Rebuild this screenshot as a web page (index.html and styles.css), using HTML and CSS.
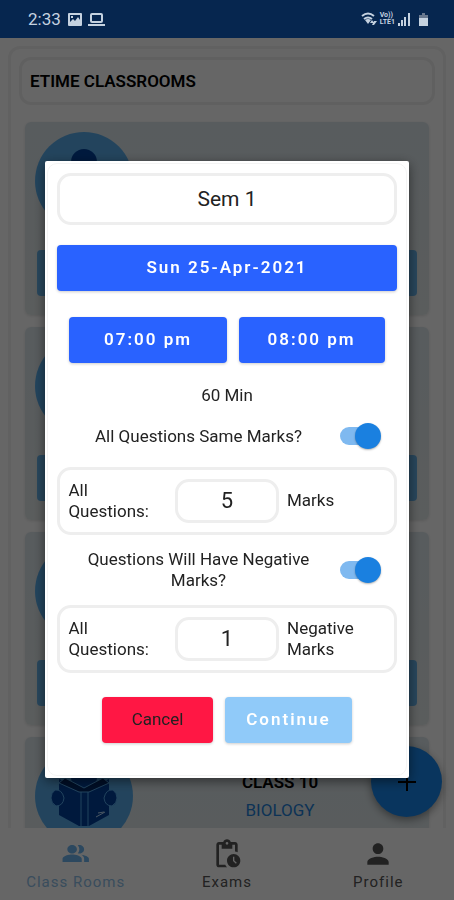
FILE: index.html
```html
<!DOCTYPE html>
<html lang="en">
<head>
    <meta charset="UTF-8">
    <meta name="viewport" content="width=device-width, initial-scale=1.0">
    <title>Etime Classrooms</title>
    <link rel="stylesheet" href="styles.css">
</head>
<body>
    <!-- Reader with open book, shared by all class cards -->
    <svg class="defs" aria-hidden="true">
        <symbol id="reader" viewBox="0 0 98 98">
            <circle cx="49" cy="30" r="13" fill="#00409a"/>
            <path d="M24 32 L49 43 L74 32 L74 68 L54 79 L44 79 L24 68 Z" fill="#00409a"/>
            <path d="M24 36 L30 31 L49 41 L68 31 L74 36 L54 45 L44 45 Z" fill="#002560" stroke="#55a7e8" stroke-width="1"/>
            <path d="M46 45 V79 M53 45 V79" stroke="#55a7e8" stroke-width="1"/>
            <path d="M61 70 l9 -5 M63 66 l6 -1" stroke="#b8d8f5" stroke-width="1" fill="none"/>
            <path d="M20 43 q7 -1 9 8 q-1 8 -8 8 q-5 -3 -5 -8 q0 -5 4 -8 Z" fill="#00409a" stroke="#55a7e8" stroke-width="1"/>
            <path d="M78 43 q-7 -1 -9 8 q1 8 8 8 q5 -3 5 -8 q0 -5 -4 -8 Z" fill="#00409a" stroke="#55a7e8" stroke-width="1"/>
        </symbol>
    </svg>

    <div class="app">
        <div class="status-bar">
            <span class="clock">2:33</span>
            <svg width="14" height="13" viewBox="0 0 14 13">
                <path fill="currentColor" fill-rule="evenodd" d="M1 0h12q1 0 1 1v11q0 1-1 1H1q-1 0-1-1V1q0-1 1-1Zm1 2v7l3-3 2 2 3-4 2 3V2Zm1 1h2v2H3Z"/>
            </svg>
            <svg class="laptop" width="17" height="13" viewBox="0 0 17 13">
                <rect x="3" y="1" width="11" height="8" rx="1" fill="none" stroke="currentColor" stroke-width="2"/>
                <path d="M0 11h17v2H0z" fill="currentColor"/>
            </svg>
            <div class="status-right">
                <svg width="16" height="14" viewBox="0 0 16 14">
                    <path d="M1 4q6-5 12 0M3 7q4-3 8 0" stroke="currentColor" stroke-width="2" fill="none"/>
                    <path d="M4 8q3-2 6 0l-3 4ZM11 8l2 3h-4ZM11 13l2-4 3 0-3 4Z" fill="currentColor"/>
                </svg>
                <span class="volte">Vo))<br>LTE1</span>
                <svg width="12" height="13" viewBox="0 0 12 13">
                    <path d="M0 10h2v3H0zM3 7h2v6H3zM6 4h2v9H6zM10 0h2v13h-2z" fill="currentColor"/>
                </svg>
                <svg class="battery" width="9" height="13" viewBox="0 0 9 13">
                    <path d="M3 0h3v2h3v3H0V2h3z" fill="#68788f"/>
                    <path d="M0 5h9v8H0z" fill="currentColor"/>
                </svg>
            </div>
        </div>

        <main class="content">
            <div class="panel">
                <h1 class="panel-title">ETIME CLASSROOMS</h1>
                <div class="class-card">
                    <div class="class-info">
                        <svg class="avatar"><use href="#reader"/></svg>
                    </div>
                    <button class="class-open" aria-label="Open class"></button>
                </div>
                <div class="class-card">
                    <div class="class-info">
                        <svg class="avatar"><use href="#reader"/></svg>
                    </div>
                    <button class="class-open" aria-label="Open class"></button>
                </div>
                <div class="class-card">
                    <div class="class-info">
                        <svg class="avatar"><use href="#reader"/></svg>
                    </div>
                    <button class="class-open" aria-label="Open class"></button>
                </div>
                <div class="class-card">
                    <div class="class-info">
                        <svg class="avatar"><use href="#reader"/></svg>
                        <div class="class-text">
                            <h2>CLASS 10</h2>
                            <p>BIOLOGY</p>
                        </div>
                    </div>
                    <button class="class-open" aria-label="Open class"></button>
                </div>
            </div>
        </main>

        <button class="fab" aria-label="Add class">
            <svg width="18" height="18" viewBox="0 0 18 18"><path d="M8 0h2v8h8v2h-8v8H8v-8H0V8h8z"/></svg>
        </button>

        <nav class="bottom-nav">
            <a href="#" class="active">
                <svg width="32" height="32" viewBox="0 0 24 24"><path d="M16.67 13.13C18.04 14.06 19 15.32 19 17v3h4v-3c0-2.18-3.57-3.47-6.33-3.87zM15 12c2.21 0 4-1.790 4-4s-1.790-4-4-4c-.47 0-.91.1-1.330.24C14.500 5.270 15 6.580 15 8s-.5 2.730-1.330 3.760c.42.14.86.24 1.330.24zM9 12c2.210 0 4-1.790 4-4s-1.790-4-4-4-4 1.790-4 4 1.790 4 4 4zM9 13c-2.670 0-8 1.340-8 4v3h16v-3c0-2.660-5.330-4-8-4z" transform="translate(1 2) scale(.9 .8)"/></svg>
                Class Rooms
            </a>
            <a href="#">
                <svg width="32" height="32" viewBox="0 0 24 24"><path d="M17 12c-2.760 0-5 2.240-5 5s2.240 5 5 5 5-2.240 5-5-2.240-5-5-5zm1.650 7.350L16.500 17.200V14h1v2.790l1.850 1.850-.7.710zM18 3h-3.180C14.400 1.840 13.300 1 12 1s-2.400.84-2.820 2H6c-1.100 0-2 .9-2 2v15c0 1.100.9 2 2 2h6.110c-.59-.57-1.070-1.250-1.420-2H6V5h2v3h8V5h2v5.080c.71.100 1.380.310 2 .600V5c0-1.100-.9-2-2-2zm-6 2c-.55 0-1-.45-1-1s.45-1 1-1 1 .45 1 1-.45 1-1 1z"/></svg>
                Exams
            </a>
            <a href="#">
                <svg width="32" height="32" viewBox="0 0 24 24"><path d="M12 12c2.210 0 4-1.790 4-4s-1.790-4-4-4-4 1.790-4 4 1.790 4 4 4zm0 2c-2.670 0-8 1.340-8 4v2h16v-2c0-2.660-5.330-4-8-4z"/></svg>
                Profile
            </a>
        </nav>
    </div>

    <div class="overlay">
        <form class="dialog" role="dialog" aria-label="Schedule exam">
            <input class="field exam-name" type="text" value="Sem 1" aria-label="Exam name">
            <button type="button" class="btn btn-primary">Sun 25-Apr-2021</button>
            <div class="times">
                <button type="button" class="btn btn-primary">07:00 pm</button>
                <button type="button" class="btn btn-primary">08:00 pm</button>
            </div>
            <p class="duration">60 Min</p>

            <div class="switch-row">
                <label for="same-marks">All Questions Same Marks?</label>
                <input class="switch" type="checkbox" id="same-marks" checked>
            </div>
            <div class="marks-box">
                <label for="marks">All Questions:</label>
                <input class="field" type="text" id="marks" value="5">
                <span>Marks</span>
            </div>

            <div class="switch-row">
                <label for="negative">Questions Will Have Negative Marks?</label>
                <input class="switch" type="checkbox" id="negative" checked>
            </div>
            <div class="marks-box">
                <label for="negative-marks">All Questions:</label>
                <input class="field" type="text" id="negative-marks" value="1">
                <span>Negative Marks</span>
            </div>

            <div class="actions">
                <button type="button" class="btn btn-cancel">Cancel</button>
                <button type="button" class="btn btn-continue">Continue</button>
            </div>
        </form>
    </div>
</body>
</html>
```
FILE: styles.css
```css
* {
    margin: 0;
    padding: 0;
    box-sizing: border-box;
}

body {
    font-family: Roboto, "Liberation Sans", sans-serif;
    background: #fff;
    color: #222;
}

button, input {
    font: inherit;
    color: inherit;
    border: none;
}

.defs {
    position: absolute;
    width: 0;
    height: 0;
}

.app {
    height: 100vh;
    display: flex;
    flex-direction: column;
    overflow: hidden;
}

/* Status bar, stays above the overlay */
.status-bar {
    position: relative;
    z-index: 2;
    flex: none;
    display: flex;
    align-items: center;
    height: 38px;
    padding: 0 26px 0 28px;
    background: #06264f;
    color: #c5d2e0;
}

.clock {
    font-size: 17px;
    margin-right: 7px;
}

.laptop {
    margin-left: 6px;
}

.status-right {
    display: flex;
    align-items: center;
    gap: 3px;
    margin-left: auto;
}

.volte {
    font-size: 7px;
    line-height: 7px;
    font-weight: bold;
}

.battery {
    margin-left: 6px;
}

/* Class list */
.content {
    flex: 1;
    min-height: 0;
    overflow: hidden;
    padding: 8px 8px 0;
}

.panel {
    padding: 8px;
    border: 3px solid #f2f2f2;
    border-radius: 12px;
}

.panel-title {
    height: 48px;
    padding: 0 8px;
    margin-bottom: 17px;
    border: 3px solid #f0f0f0;
    border-radius: 12px;
    font-size: 17px;
    font-weight: 600;
    line-height: 42px;
    color: #000;
}

.class-card {
    height: 193px;
    margin: 0 6px 12px;
    padding: 10px 12px;
    background: linear-gradient(#dbe5ea, #e2e8e8);
    border-radius: 6px;
    box-shadow: 0 1px 3px rgba(0, 0, 0, 0.12);
}

.class-info {
    display: flex;
    height: 118px;
}

.avatar {
    flex: none;
    width: 98px;
    height: 98px;
    margin-left: -2px;
    background: #59abe8;
    border-radius: 50%;
}

.class-text {
    flex: 1;
    padding: 21px 0 0 10px;
    text-align: center;
    font-size: 17px;
    line-height: 28px;
}

.class-text h2 {
    font-size: 17px;
    font-weight: 600;
    color: #000;
}

.class-text p {
    color: #1f7fd6;
}

.class-open {
    display: block;
    width: 100%;
    height: 46px;
    background: #66b0e6;
    border-radius: 4px;
}

.fab {
    position: absolute;
    right: 12px;
    bottom: 83px;
    display: flex;
    align-items: center;
    justify-content: center;
    width: 71px;
    height: 71px;
    background: #1886ea;
    border-radius: 50%;
    box-shadow: 0 3px 8px rgba(0, 0, 0, 0.4);
}

.bottom-nav {
    flex: none;
    display: flex;
    height: 72px;
    padding-top: 10px;
    background: #fff;
}

.bottom-nav a {
    flex: 1;
    display: flex;
    flex-direction: column;
    align-items: center;
    color: #555;
    fill: #555;
    font-size: 15px;
    line-height: 24px;
    letter-spacing: 1px;
    text-decoration: none;
}

.bottom-nav .active {
    color: #8fc0e8;
    fill: #6fb5ee;
}

/* Dialog */
.overlay {
    position: fixed;
    inset: 0;
    z-index: 1;
    display: flex;
    align-items: center;
    justify-content: center;
    padding-top: 38px;
    background: rgba(0, 0, 0, 0.6);
}

.dialog {
    position: relative;
    width: 80%;
    padding: 12px 12px 35px;
    background: #fff;
    border-radius: 2px;
    box-shadow: 0 3px 12px rgba(0, 0, 0, 0.5);
    font-size: 17px;
    line-height: 21px;
}

.dialog::before {
    content: "";
    position: absolute;
    inset: 2px;
    border: 1px solid #f4f4f4;
    border-radius: 10px;
    pointer-events: none;
}

.field {
    width: 100%;
    background: #fff;
    border: 3px solid #eee;
    border-radius: 14px;
    text-align: center;
    font-size: 21px;
}

.exam-name {
    display: block;
    height: 52px;
    margin-bottom: 20px;
}

.btn {
    height: 46px;
    border-radius: 4px;
    box-shadow: 0 1px 3px rgba(0, 0, 0, 0.2);
    font-size: 17px;
    letter-spacing: 2px;
}

.btn-primary {
    width: 100%;
    background: #2962ff;
    color: #fff;
    font-weight: 600;
}

.times {
    display: grid;
    grid-template-columns: 14fr 13fr;
    gap: 12px;
    padding: 0 12px;
    margin: 26px 0 22px;
}

.duration {
    text-align: center;
}

.switch-row {
    display: flex;
    align-items: center;
    min-height: 61px;
    padding-right: 17px;
}

.switch-row label {
    flex: 1;
    padding: 14px 16px;
    text-align: center;
}

.switch {
    appearance: none;
    position: relative;
    width: 40px;
    height: 18px;
    background: #7fb9f0;
    border-radius: 9px;
}

.switch::after {
    content: "";
    position: absolute;
    top: -4px;
    left: 15px;
    width: 26px;
    height: 26px;
    background: #1a80e0;
    border-radius: 50%;
    box-shadow: 0 1px 2px rgba(0, 0, 0, 0.3);
}

.switch:not(:checked)::after {
    left: 0;
}

.marks-box {
    display: grid;
    grid-template-columns: 1fr 104px 1fr;
    align-items: center;
    gap: 8px;
    min-height: 68px;
    padding: 0 8px;
    border: 3px solid #eee;
    border-radius: 14px;
}

.marks-box .field {
    height: 44px;
    font-size: 22px;
}

.actions {
    display: flex;
    justify-content: center;
    gap: 12px;
    margin-top: 24px;
}

.btn-cancel {
    width: 111px;
    background: #ff1744;
    letter-spacing: normal;
}

.btn-continue {
    width: 127px;
    background: #90caf9;
    color: #fff;
    font-weight: 600;
}
```
